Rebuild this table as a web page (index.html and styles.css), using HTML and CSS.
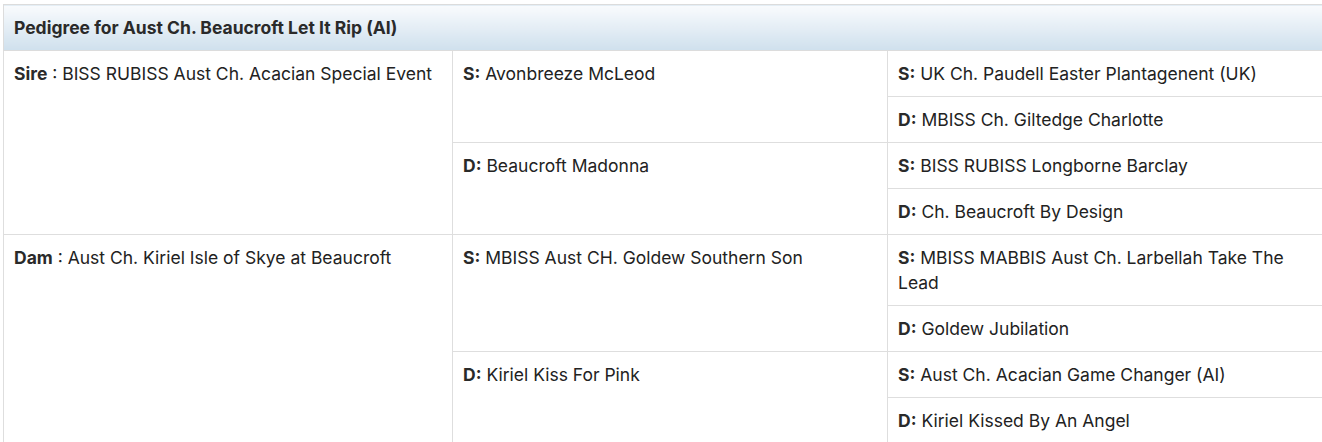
FILE: index.html
```html
<!DOCTYPE html>
<html lang="en">
<head>
<meta charset="utf-8">
<title>Pedigree</title>
<link rel="stylesheet" href="styles.css">
</head>
<body>
<div class="wrap">
<table class="pedigree">
  <colgroup>
    <col class="c1"><col class="c2"><col class="c3">
  </colgroup>
  <thead>
    <tr><th colspan="3">Pedigree for Aust Ch. Beaucroft Let It Rip (AI)</th></tr>
  </thead>
  <tbody>
    <tr>
      <td rowspan="4"><b>Sire</b> : BISS RUBISS Aust Ch. Acacian Special Event</td>
      <td rowspan="2"><b>S:</b> Avonbreeze McLeod</td>
      <td><b>S:</b> UK Ch. Paudell Easter Plantagenent (UK)</td>
    </tr>
    <tr><td><b>D:</b> MBISS Ch. Giltedge Charlotte</td></tr>
    <tr>
      <td rowspan="2"><b>D:</b> Beaucroft Madonna</td>
      <td><b>S:</b> BISS RUBISS Longborne Barclay</td>
    </tr>
    <tr><td><b>D:</b> Ch. Beaucroft By Design</td></tr>
    <tr>
      <td rowspan="4"><b>Dam</b> : Aust Ch. Kiriel Isle of Skye at Beaucroft</td>
      <td rowspan="2"><b>S:</b> MBISS Aust CH. Goldew Southern Son</td>
      <td><b>S:</b> MBISS MABBIS Aust Ch. Larbellah Take The Lead</td>
    </tr>
    <tr><td><b>D:</b> Goldew Jubilation</td></tr>
    <tr>
      <td rowspan="2"><b>D:</b> Kiriel Kiss For Pink</td>
      <td><b>S:</b> Aust Ch. Acacian Game Changer (AI)</td>
    </tr>
    <tr><td><b>D:</b> Kiriel Kissed By An Angel</td></tr>
  </tbody>
</table>
</div>
</body>
</html>
```
FILE: styles.css
```css
html, body {
  margin: 0;
  padding: 0;
  background: #ffffff;
}
body {
  font-family: Inter, "Noto Sans", "Liberation Sans", sans-serif;
  font-size: 17.5px;
  line-height: 25px;
  color: #222222;
  overflow: hidden;
}
.wrap {
  padding: 4px 0 0 3px;
  width: 1330px;
}
.pedigree {
  border-collapse: collapse;
  width: 1330px;
  table-layout: fixed;
}
.c1 { width: 449px; }
.c2 { width: 435px; }
.pedigree th {
  text-align: left;
  font-weight: 700;
  padding: 10px;
  border: 1px solid #dcdcdc;
  background: linear-gradient(to bottom, #f9fbfd 0%, #cfe0ed 100%);
  color: #2a2a2a;
}
.pedigree td {
  vertical-align: top;
  padding: 10px;
  border: 1px solid #dedede;
}
.pedigree b {
  font-weight: 700;
  color: #2a2a2a;
}
```
